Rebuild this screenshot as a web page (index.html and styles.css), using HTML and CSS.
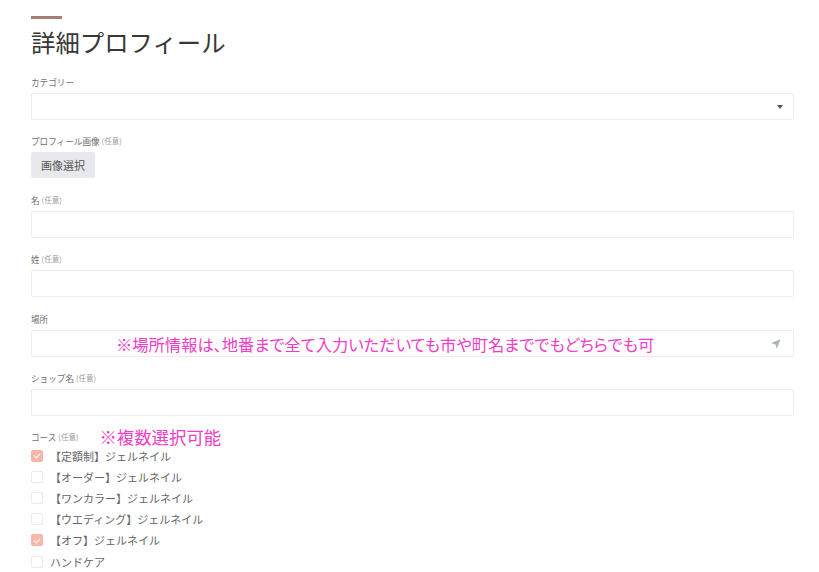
FILE: index.html
```html
<!DOCTYPE html>
<html lang="ja">
<head>
<meta charset="utf-8">
<title>詳細プロフィール</title>
<link rel="stylesheet" href="styles.css">
</head>
<body>
<div class="page">
  <div class="accent"></div>
  <h1 class="title">詳細プロフィール</h1>

  <div class="field">
    <div class="label">カテゴリー</div>
    <div class="box select"><span class="caret"></span></div>
  </div>

  <div class="field field-wide">
    <div class="label">プロフィール画像 <span class="opt">(任意)</span></div>
    <div class="btn">画像選択</div>
  </div>

  <div class="field">
    <div class="label">名 <span class="opt">(任意)</span></div>
    <div class="box"></div>
  </div>

  <div class="field field-wide">
    <div class="label">姓 <span class="opt">(任意)</span></div>
    <div class="box"></div>
  </div>

  <div class="field">
    <div class="label">場所</div>
    <div class="box loc">
      <span class="note note-loc">※場所情報は、地番まで全て入力いただいても市や町名まででもどちらでも可</span>
      <svg class="loc-icon" viewBox="0 0 24 24" width="12" height="12"><path d="M21 2.5 L2.5 10.2 L11 12.8 L13.6 21.5 Z" fill="#a9b1bc"/></svg>
    </div>
  </div>

  <div class="field">
    <div class="label">ショップ名 <span class="opt">(任意)</span></div>
    <div class="box"></div>
  </div>

  <div class="field course">
    <div class="label label-course">コース <span class="opt">(任意)</span><span class="note note-course">※複数選択可能</span></div>
    <ul class="checks">
      <li class="check"><span class="cb on"></span>【定額制】ジェルネイル</li>
      <li class="check"><span class="cb"></span>【オーダー】ジェルネイル</li>
      <li class="check"><span class="cb"></span>【ワンカラー】ジェルネイル</li>
      <li class="check"><span class="cb"></span>【ウエディング】ジェルネイル</li>
      <li class="check"><span class="cb on"></span>【オフ】ジェルネイル</li>
      <li class="check"><span class="cb"></span>ハンドケア</li>
    </ul>
  </div>
</div>
</body>
</html>
```

FILE: styles.css
```css
* { box-sizing: border-box; }
html, body { margin: 0; padding: 0; background: #fff; }
body {
  font-family: "Noto Sans CJK JP", "Noto Sans", sans-serif;
  color: #333;
  overflow: hidden;
}
.page {
  padding: 16px 25px 0 31px;
}
.accent {
  width: 31px;
  height: 3px;
  background: #a47e70;
}
.title {
  margin: 7px 0 18px;
  font-size: 24.4px;
  line-height: 32px;
  height: 32px;
  font-weight: 400;
  color: #383838;
}
.field {
  margin-bottom: 15px;
}
.field-wide { margin-bottom: 16px; }
.label {
  font-size: 8.6px;
  line-height: 12px;
  height: 12px;
  color: #6f6f6f;
  margin-bottom: 5px;
  display: flex;
  align-items: center;
  gap: 2px;
}
.label-course { margin-bottom: 2px; }
.opt {
  font-size: 7.5px;
  color: #9a9a9a;
}
.box {
  height: 27px;
  border: 1px solid #ededed;
  border-radius: 2px;
  background: #fff;
  display: flex;
  align-items: center;
}
.select { justify-content: flex-end; padding-right: 10px; }
.caret {
  width: 0; height: 0;
  border-left: 3px solid transparent;
  border-right: 3px solid transparent;
  border-top: 4px solid #555;
}
.btn {
  display: flex;
  width: max-content;
  align-items: center;
  height: 26px;
  padding: 0 10px;
  background: #e8e9ec;
  border-radius: 2px;
  font-size: 11px;
  color: #555;
}
.loc { padding-right: 11px; }
.note {
  color: #f03cc6;
  white-space: nowrap;
}
.note-loc {
  font-size: 16.3px;
  margin-left: 84px;
  font-feature-settings: "palt";
}
.loc-icon { margin-left: auto; }
.note-course {
  font-size: 17.4px;
  margin-left: 19px;
}
.checks {
  list-style: none;
  margin: 0;
  padding: 0;
}
.check {
  display: flex;
  align-items: center;
  height: 21.2px;
  font-size: 11px;
  color: #666;
}
.cb {
  width: 12px;
  height: 12px;
  border: 1px solid #ececec;
  border-radius: 2px;
  background: #fff;
  margin-right: 7px;
  position: relative;
  flex: none;
}
.cb.on {
  background: #f8b5a8;
  border-color: #f8b5a8;
}
.cb.on::after {
  content: "";
  position: absolute;
  left: 3px;
  top: 1.5px;
  width: 3px;
  height: 5px;
  border: solid #fff;
  border-width: 0 1.5px 1.5px 0;
  transform: rotate(45deg);
}
```
